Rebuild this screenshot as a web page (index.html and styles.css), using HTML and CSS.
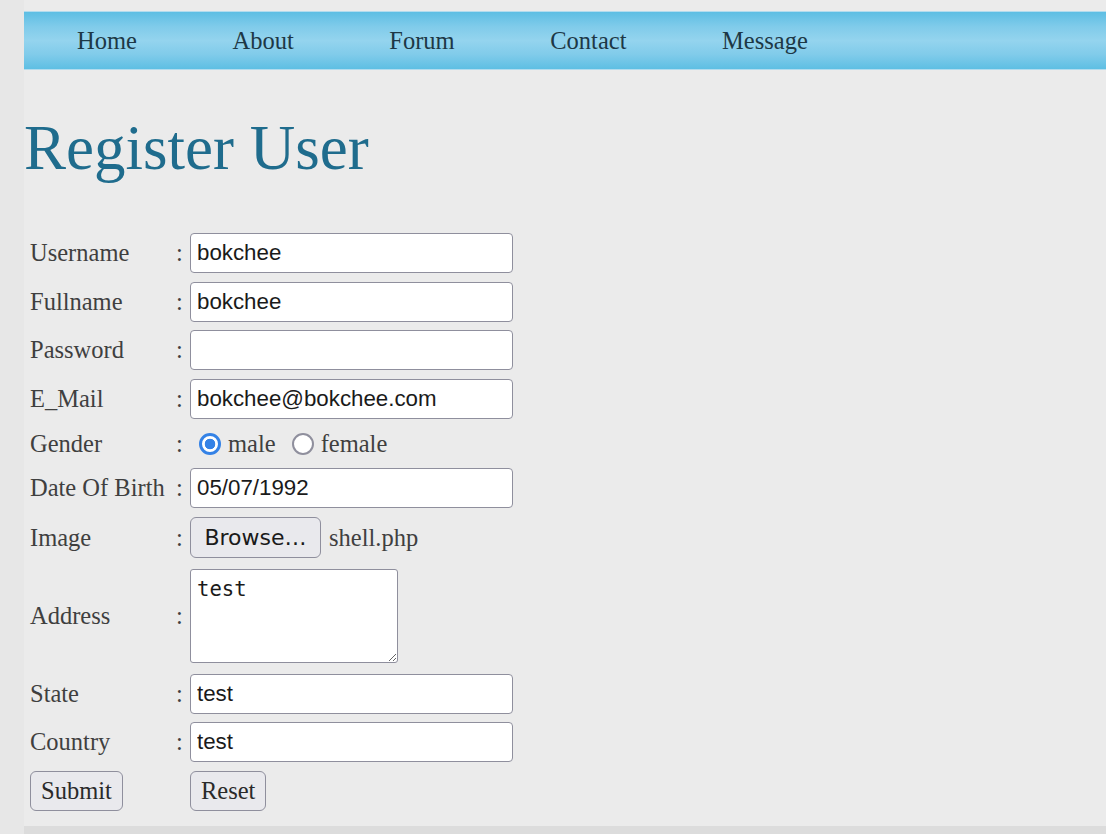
FILE: index.html
```html
<!DOCTYPE html>
<html lang="en">
<head>
<meta charset="utf-8">
<title>Register User</title>
<link rel="stylesheet" href="styles.css">
</head>
<body>
<div class="page">
  <nav class="nav">
    <a href="#">Home</a>
    <a href="#">About</a>
    <a href="#">Forum</a>
    <a href="#">Contact</a>
    <a href="#">Message</a>
  </nav>
  <h1 class="title">Register User</h1>
  <form class="form">
    <div class="lbl">Username</div><div class="colon">:</div><input class="txt" type="text" value="bokchee">
    <div class="lbl">Fullname</div><div class="colon">:</div><input class="txt" type="text" value="bokchee">
    <div class="lbl">Password</div><div class="colon">:</div><input class="txt" type="password" value="">
    <div class="lbl">E_Mail</div><div class="colon">:</div><input class="txt" type="text" value="bokchee@bokchee.com">
    <div class="lbl">Gender</div><div class="colon">:</div>
    <div class="radios">
      <label class="opt"><input class="radio" type="radio" name="g" checked>male</label>
      <label class="opt"><input class="radio" type="radio" name="g">female</label>
    </div>
    <div class="lbl">Date Of Birth</div><div class="colon">:</div><input class="txt" type="text" value="05/07/1992">
    <div class="lbl">Image</div><div class="colon">:</div>
    <div class="file"><button class="browse" type="button">Browse…</button><span class="fname">shell.php</span></div>
    <div class="lbl">Address</div><div class="colon">:</div><textarea class="area">test</textarea>
    <div class="lbl">State</div><div class="colon">:</div><input class="txt" type="text" value="test">
    <div class="lbl">Country</div><div class="colon">:</div><input class="txt" type="text" value="test">
    <div class="lbl"><button class="btn" type="submit">Submit</button></div><div class="colon"></div>
    <div><button class="btn" type="reset">Reset</button></div>
  </form>
  <div class="footer"></div>
</div>
</body>
</html>
```

FILE: styles.css
```css
html, body {
  margin: 0;
  padding: 0;
}
body {
  background: #e7e7e7;
  font-family: "Liberation Serif", serif;
  overflow: hidden;
}
.page {
  margin-left: 24px;
  background: #ebebeb;
  padding-top: 11px;
  min-height: 900px;
}
.nav {
  height: 57px;
  border-top: 1px solid #b3dcee;
  border-bottom: 1px solid #b3dcee;
  background: linear-gradient(to bottom, #5dbee3 0%, #7fcbea 25%, #94d4ee 50%, #80cbea 75%, #5ebfe3 100%);
  display: flex;
  align-items: center;
  gap: 95.6px;
  padding-left: 53px;
}
.nav a {
  font-size: 24.5px;
  color: #1d3846;
  text-decoration: none;
}
.title {
  margin: 42px 0 0;
  font-size: 63px;
  line-height: 72px;
  font-weight: normal;
  color: #1f6c8d;
}
.form {
  margin-top: 49px;
  padding-left: 6px;
  display: grid;
  grid-template-columns: 141px 19px auto;
  justify-content: start;
  align-items: center;
  row-gap: 8.7px;
}
.lbl {
  font-size: 24.5px;
  line-height: 28px;
  color: #3f3f3f;
}
.colon {
  font-size: 24.5px;
  line-height: 28px;
  color: #3f3f3f;
  padding-left: 5px;
}
.txt {
  box-sizing: border-box;
  width: 323px;
  height: 40px;
  margin: 0;
  border: 1px solid #8f8f9d;
  border-radius: 4px;
  background: #fff;
  padding: 0 6px;
  font-family: "Liberation Sans", sans-serif;
  font-size: 22.3px;
  color: #1a1a1a;
  outline: none;
}
.radios {
  display: flex;
  align-items: center;
  height: 32px;
  font-size: 24.5px;
  color: #3f3f3f;
}
.opt {
  display: flex;
  align-items: center;
  margin-right: 15px;
}
.radio {
  appearance: none;
  -webkit-appearance: none;
  box-sizing: border-box;
  width: 22px;
  height: 22px;
  margin: 0 7px 0 9px;
  border-radius: 50%;
  border: 2.5px solid #8f8f9d;
  background: #fff;
}
.opt + .opt .radio {
  margin-left: 1px;
}
.radio:checked {
  border: 3px solid #3482e6;
  background: radial-gradient(circle, #3482e6 0 5px, #fff 5.6px);
}
.file {
  display: flex;
  align-items: center;
  gap: 8px;
}
.browse {
  box-sizing: border-box;
  height: 41px;
  width: 131px;
  margin: 0;
  padding: 0;
  border: 1px solid #8f8f9d;
  border-radius: 6px;
  background: #e9e9ed;
  font-family: "DejaVu Sans", sans-serif;
  font-size: 22px;
  color: #1a1a1a;
}
.fname {
  font-size: 24.5px;
  color: #3f3f3f;
}
.area {
  box-sizing: border-box;
  width: 208px;
  height: 94px;
  margin: 2.5px 0 1.5px;
  border: 1px solid #8f8f9d;
  border-radius: 3px;
  background: #fff;
  padding: 7px 6px 3px;
  font-family: "DejaVu Sans Mono", monospace;
  font-size: 20.6px;
  color: #1a1a1a;
  outline: none;
}
.btn {
  box-sizing: border-box;
  height: 40px;
  margin: 0;
  padding: 0 10px;
  border: 1px solid #8f8f9d;
  border-radius: 6px;
  background: #e9e9ed;
  font-family: "Liberation Serif", serif;
  font-size: 24.5px;
  color: #2a2a2a;
}
.footer {
  margin-top: 15px;
  height: 60px;
  background: #dcdcdc;
}
```
